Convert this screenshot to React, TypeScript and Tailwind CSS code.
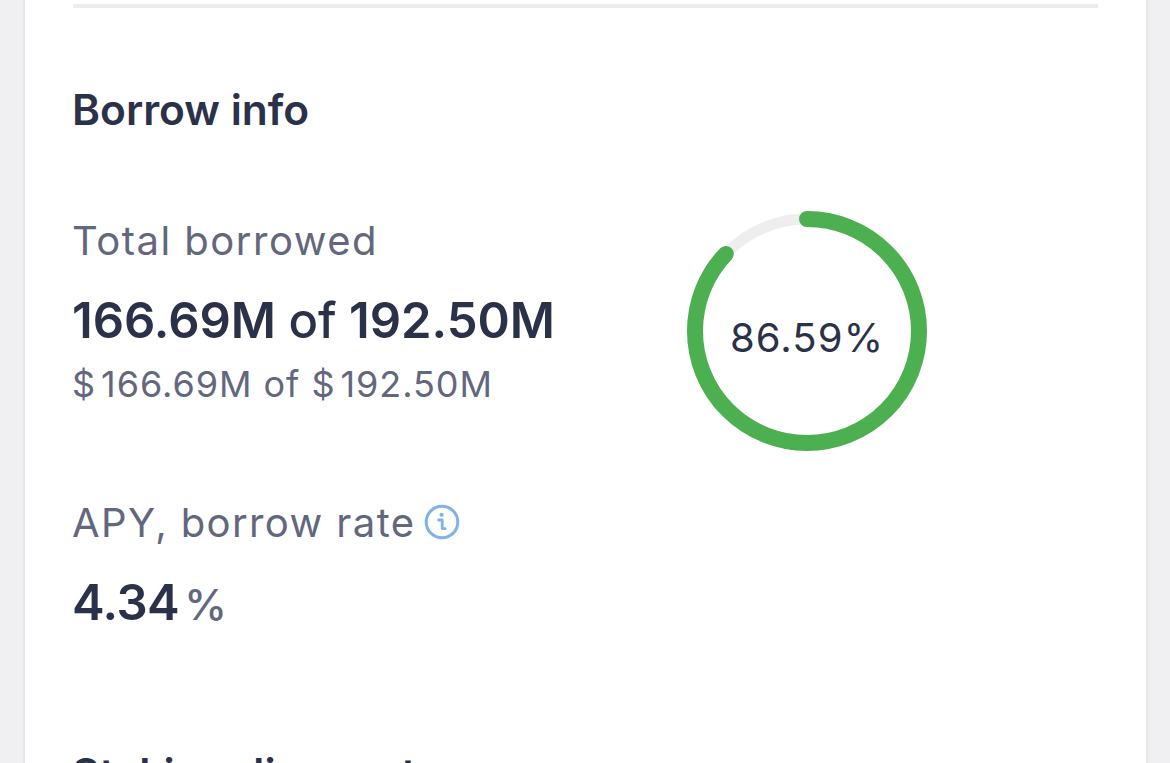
const ink = "text-[#2b3149]";
const muted = "text-[#62677e]";

function Ring() {
  const r = 112;
  const c = 2 * Math.PI * r;
  return (
    <div className="relative w-[240px] h-[240px]">
      <svg width="240" height="240" viewBox="0 0 240 240" className="-rotate-90">
        <circle cx="120" cy="120" r={r} fill="none" stroke="#eeeeee" strokeWidth="11" />
        <circle
          cx="120"
          cy="120"
          r={r}
          fill="none"
          stroke="#4caf50"
          strokeWidth="16"
          strokeLinecap="round"
          strokeDasharray={`${c * 0.87} ${c}`}
        />
      </svg>
      <div className={`absolute inset-0 flex items-center justify-center text-[40px] leading-none tracking-[1.1px] pt-[14px] ${ink}`}>
        86.59%
      </div>
    </div>
  );
}

function InfoIcon() {
  return (
    <svg width="36" height="36" viewBox="0 0 36 36" fill="none" className="ml-[9px] mt-[-3px]">
      <circle cx="18" cy="18" r="15.8" stroke="#7fb2ea" strokeWidth="3" />
      <circle cx="17.6" cy="10.8" r="2.1" fill="#7fb2ea" />
      <path d="M14.6 16h3.6v8.6h3" stroke="#7fb2ea" strokeWidth="2.8" strokeLinecap="round" strokeLinejoin="round" />
    </svg>
  );
}

export default function App() {
  return (
    <div className="h-[763px] overflow-hidden bg-[#f0f0f2] pl-[23px] pr-[22px] font-['Inter',sans-serif]">
      <div className="h-full bg-white border-x-2 border-[#e6e6e9] pl-[47px] pr-[48px] pt-[4px]">
        <div className="h-[4px] ml-px bg-[#ececee]" />

        <h2 className={`mt-[72px] text-[42.5px] leading-[60px] font-semibold ${ink}`}>Borrow info</h2>

        <div className="flex mt-[71px]">
          <div className="w-[615px]">
            <div className={`text-[40px] leading-[60px] tracking-[1.5px] ${muted}`}>Total borrowed</div>
            <div className={`mt-[20px] text-[49px] leading-[60px] font-semibold ${ink}`}>
              166.69M <span className="font-medium">of</span> 192.50M
            </div>
            <div className={`mt-[8px] text-[36px] leading-[50px] tracking-[0.95px] ${muted}`}>
              $<span className="ml-[5px]">166.69M</span> of $<span className="ml-[5px]">192.50M</span>
            </div>
          </div>
          <Ring />
        </div>

        <div className={`flex items-center mt-[42px] text-[40px] leading-[60px] tracking-[1.4px] ${muted}`}>
          APY, borrow rate
          <InfoIcon />
        </div>
        <div className={`mt-[20px] text-[49px] leading-[60px] font-semibold tracking-[-0.5px] ${ink}`}>
          4.34<span className={`ml-[5px] text-[43px] font-medium tracking-normal ${muted}`}>%</span>
        </div>

        <h2 className={`mt-[110px] text-[42.5px] leading-[60px] font-semibold ${ink}`}>Staking discount</h2>
      </div>
    </div>
  );
}
